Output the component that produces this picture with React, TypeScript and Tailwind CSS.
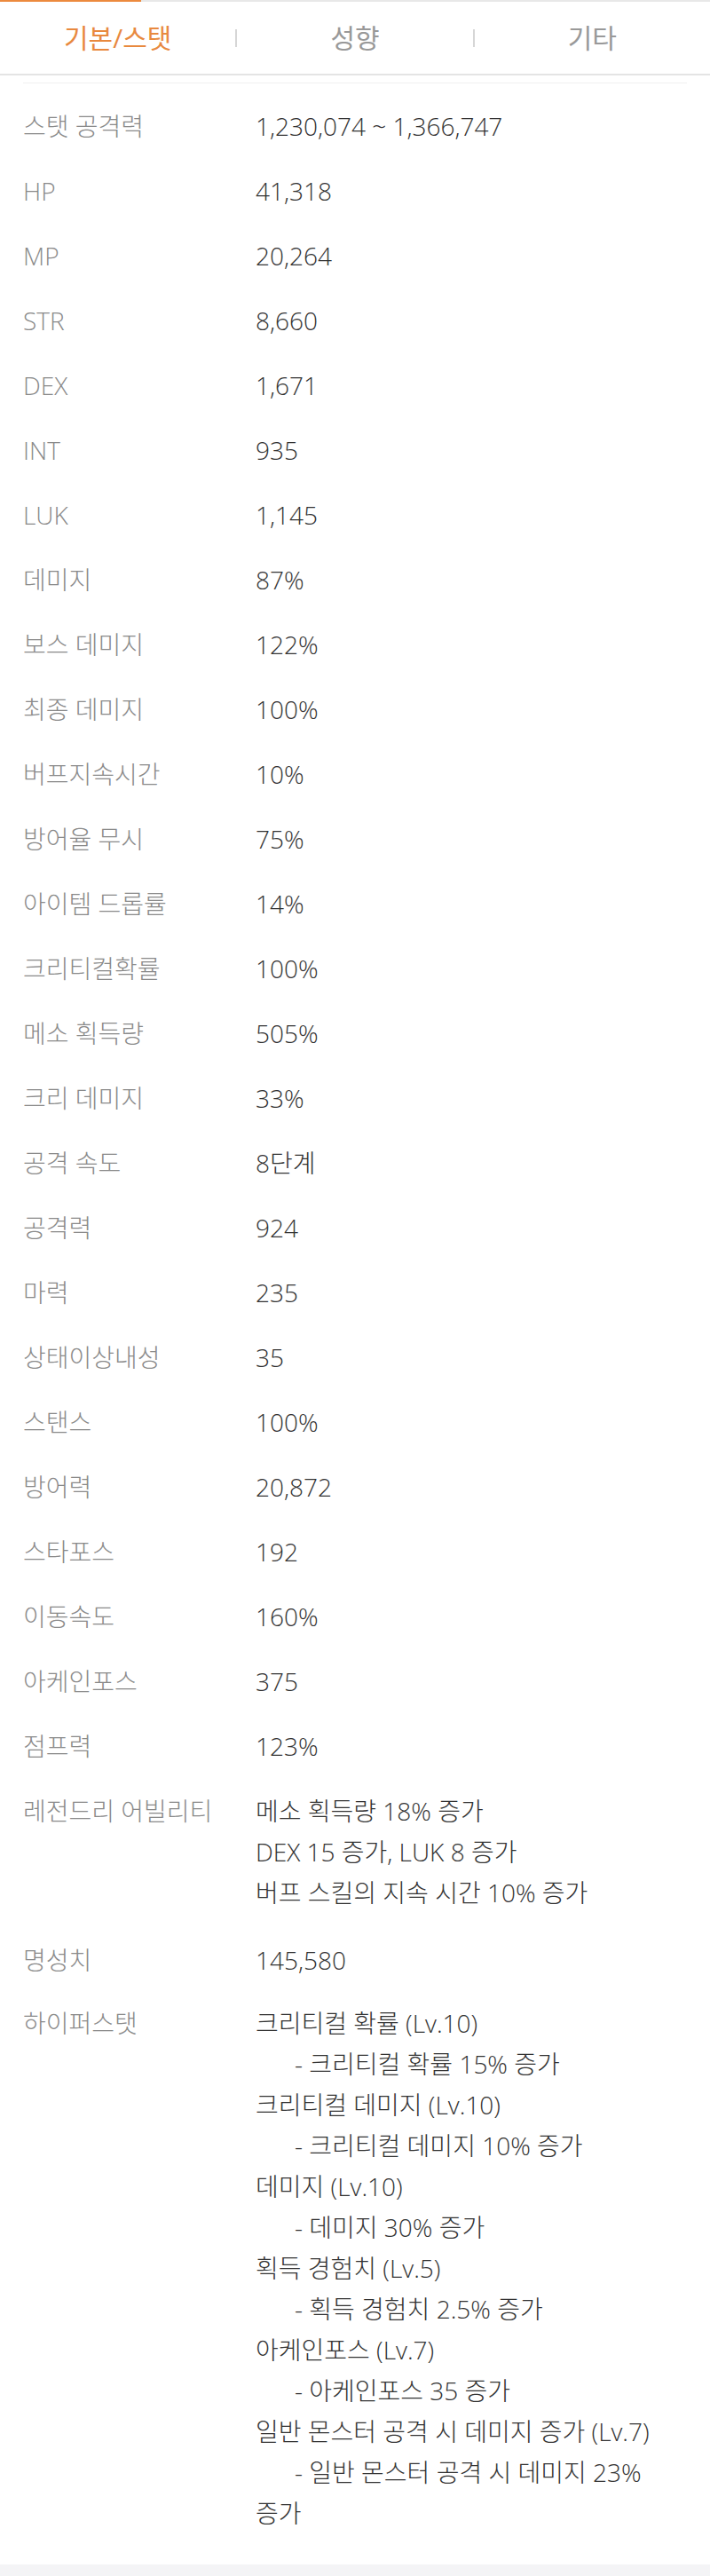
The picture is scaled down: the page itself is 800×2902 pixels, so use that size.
import React from "react";

// basic stat rows, label -> value
const stats: [string, string][] = [
  ["스탯 공격력", "1,230,074 ~ 1,366,747"],
  ["HP", "41,318"],
  ["MP", "20,264"],
  ["STR", "8,660"],
  ["DEX", "1,671"],
  ["INT", "935"],
  ["LUK", "1,145"],
  ["데미지", "87%"],
  ["보스 데미지", "122%"],
  ["최종 데미지", "100%"],
  ["버프지속시간", "10%"],
  ["방어율 무시", "75%"],
  ["아이템 드롭률", "14%"],
  ["크리티컬확률", "100%"],
  ["메소 획득량", "505%"],
  ["크리 데미지", "33%"],
  ["공격 속도", "8단계"],
  ["공격력", "924"],
  ["마력", "235"],
  ["상태이상내성", "35"],
  ["스탠스", "100%"],
  ["방어력", "20,872"],
  ["스타포스", "192"],
  ["이동속도", "160%"],
  ["아케인포스", "375"],
  ["점프력", "123%"],
];

const legendary = [
  "메소 획득량 18% 증가",
  "DEX 15 증가, LUK 8 증가",
  "버프 스킬의 지속 시간 10% 증가",
];

const hyperStats = [
  { name: "크리티컬 확률 (Lv.10)", desc: "크리티컬 확률 15% 증가" },
  { name: "크리티컬 데미지 (Lv.10)", desc: "크리티컬 데미지 10% 증가" },
  { name: "데미지 (Lv.10)", desc: "데미지 30% 증가" },
  { name: "획득 경험치 (Lv.5)", desc: "획득 경험치 2.5% 증가" },
  { name: "아케인포스 (Lv.7)", desc: "아케인포스 35 증가" },
  { name: "일반 몬스터 공격 시 데미지 증가 (Lv.7)", desc: "일반 몬스터 공격 시 데미지 23%", wrap: "증가" },
];

const font = { fontFamily: '"Open Sans", "Noto Sans CJK KR", sans-serif' };

function Row({ label, children, className = "py-[13.5px]" }: { label: string; children: React.ReactNode; className?: string }) {
  return (
    <div className={`flex ${className}`}>
      <div className="w-[262px] shrink-0 text-[28px] leading-[46px] text-[#8a8a8a] font-light">{label}</div>
      <div className="flex-1 text-[28px] leading-[46px] text-[#333333] font-light">{children}</div>
    </div>
  );
}

export default function App() {
  return (
    <div className="min-h-[2902px] flex flex-col bg-white" style={font}>
      {/* tab indicator strip */}
      <div className="h-[2px] bg-[#e8e8e8]">
        <div className="w-[159px] h-full bg-[#ec8a3e]" />
      </div>

      {/* tabs */}
      <div className="h-[83px] flex items-center border-b-2 border-[#e4e4e4]">
        <div className="flex-1 text-center text-[30px] text-[#e8893f]">기본/스탯</div>
        <div className="w-[2px] h-[20px] bg-[#d6d6d6]" />
        <div className="flex-1 text-center text-[30px] text-[#999999]">성향</div>
        <div className="w-[2px] h-[20px] bg-[#d6d6d6]" />
        <div className="flex-1 text-center text-[30px] text-[#999999]">기타</div>
      </div>

      <div className="px-[26px] pt-[8px] pb-[21.5px]">
        <div className="h-px bg-[#f0f0f0]" />
        <div className="pt-[11.5px]">
          {stats.map(([label, value]) => (
            <Row key={label} label={label}>
              {value}
            </Row>
          ))}

          <Row label="레전드리 어빌리티" className="pt-[13.5px] pb-[16.5px]">
            {legendary.map((line) => (
              <div key={line}>{line}</div>
            ))}
          </Row>

          <Row label="명성치" className="pt-[13.5px] pb-[11.5px]">
            145,580
          </Row>

          <Row label="하이퍼스탯">
            {hyperStats.map((h) => (
              <React.Fragment key={h.name}>
                <div>{h.name}</div>
                <div className="indent-[44px]">
                  - {h.desc}
                  {h.wrap && (
                    <>
                      <br />
                      {h.wrap}
                    </>
                  )}
                </div>
              </React.Fragment>
            ))}
          </Row>
        </div>
      </div>

      <div className="flex-1 bg-[#f4f4f6]" />
    </div>
  );
}
